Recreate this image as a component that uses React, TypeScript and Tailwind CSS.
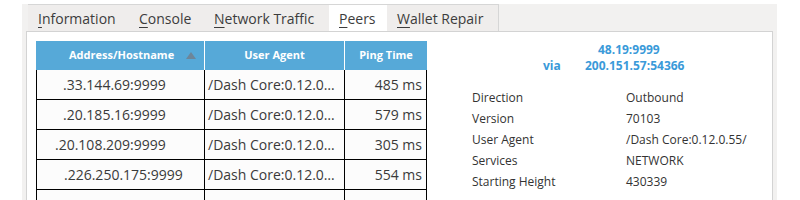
import React from 'react';

const tabs = [
  { label: 'Information', w: 'w-[101px]', active: false },
  { label: 'Console', w: 'w-[75px]', active: false },
  { label: 'Network Traffic', w: 'w-[125px]', active: false },
  { label: 'Peers', w: 'w-[58px]', active: true },
  { label: 'Wallet Repair', w: 'w-[112px]', active: false },
];

const peers = [
  { addr: '.33.144.69:9999', pad: 'pl-[26px]', ping: '485 ms' },
  { addr: '.20.185.16:9999', pad: 'pl-[26px]', ping: '579 ms' },
  { addr: '.20.108.209:9999', pad: 'pl-[18px]', ping: '305 ms' },
  { addr: '.226.250.175:9999', pad: 'pl-[27px]', ping: '554 ms' },
];

const details = [
  ['Direction', 'Outbound'],
  ['Version', '70103'],
  ['User Agent', '/Dash Core:0.12.0.55/'],
  ['Services', 'NETWORK'],
  ['Starting Height', '430339'],
];

export default function App() {
  return (
    <div className="w-[800px] h-[200px] bg-white overflow-hidden font-['Open_Sans',sans-serif] text-[#3c3c3c]">
      <div className="ml-[22px] mt-[4px] w-[755px] h-[196px] bg-[#f2f1f0] flex flex-col">
        {/* tab bar */}
        <div className="h-[28px] flex pl-[6px]">
          {tabs.map(t => (
            <div
              key={t.label}
              className={`${t.w} h-full flex items-center pl-[10px] text-[14px] border-t border-[#d6d6d6] ${t.active ? 'bg-white' : 'bg-[#efedec]'} ${t.label === 'Wallet Repair' ? 'border-r' : ''}`}
            >
              <span>
                <span className="underline underline-offset-[3px] decoration-1">{t.label[0]}</span>
                {t.label.slice(1)}
              </span>
            </div>
          ))}
        </div>

        {/* panel */}
        <div className="ml-[4px] w-[747px] flex-1 bg-white border border-[#d3d3d3] border-b-0 flex pt-[9px] pl-[9px]">
          {/* table */}
          <div className="w-[391px] flex flex-col">
            <div className="h-[29px] flex bg-[#56a9d8] text-white font-bold text-[11px]">
              <div className="w-[169px] flex items-center relative border-r border-white">
                <span className="ml-[33px]">Address/Hostname</span>
                <svg className="absolute left-[150px] top-[11px]" width="10" height="7" viewBox="0 0 10 7">
                  <path d="M5 0 L10 7 L0 7 Z" fill="#6d8699" />
                </svg>
              </div>
              <div className="w-[140px] flex items-center justify-center border-r border-white">User Agent</div>
              <div className="flex-1 flex items-center justify-center">Ping Time</div>
            </div>
            {peers.map(p => (
              <div key={p.addr} className="h-[30px] flex border-l border-r border-b border-black bg-[#fcfcfc] text-[14px] text-[#3a3a3a]">
                <div className={`w-[168px] flex items-center border-r border-black ${p.pad}`}>{p.addr}</div>
                <div className="w-[140px] flex items-center pl-[3px] border-r border-black whitespace-nowrap overflow-hidden">/Dash Core:0.12.0…</div>
                <div className="flex-1 flex items-center justify-end pr-[4px]">{p.ping}</div>
              </div>
            ))}
            <div className="h-[10px] flex border-l border-r border-black bg-[#fcfcfc]">
              <div className="w-[168px] border-r border-black" />
              <div className="w-[140px] border-r border-black" />
            </div>
          </div>

          {/* details */}
          <div className="flex-1 flex flex-col">
            <div className="text-[#3a9ad9] font-bold text-[12px] leading-[16px]">
              <div className="pl-[171px] pt-[1px]">48.19:9999</div>
              <div className="flex">
                <span className="pl-[116px] w-[158px]">via</span>
                <span>200.151.57:54366</span>
              </div>
            </div>
            <div className="mt-[13px] pl-[45px] flex flex-col text-[12px] text-[#333]">
              {details.map(([k, v]) => (
                <div key={k} className="flex h-[21px] items-center">
                  <span className="w-[154px]">{k}</span>
                  <span>{v}</span>
                </div>
              ))}
            </div>
          </div>
        </div>
      </div>
    </div>
  );
}
